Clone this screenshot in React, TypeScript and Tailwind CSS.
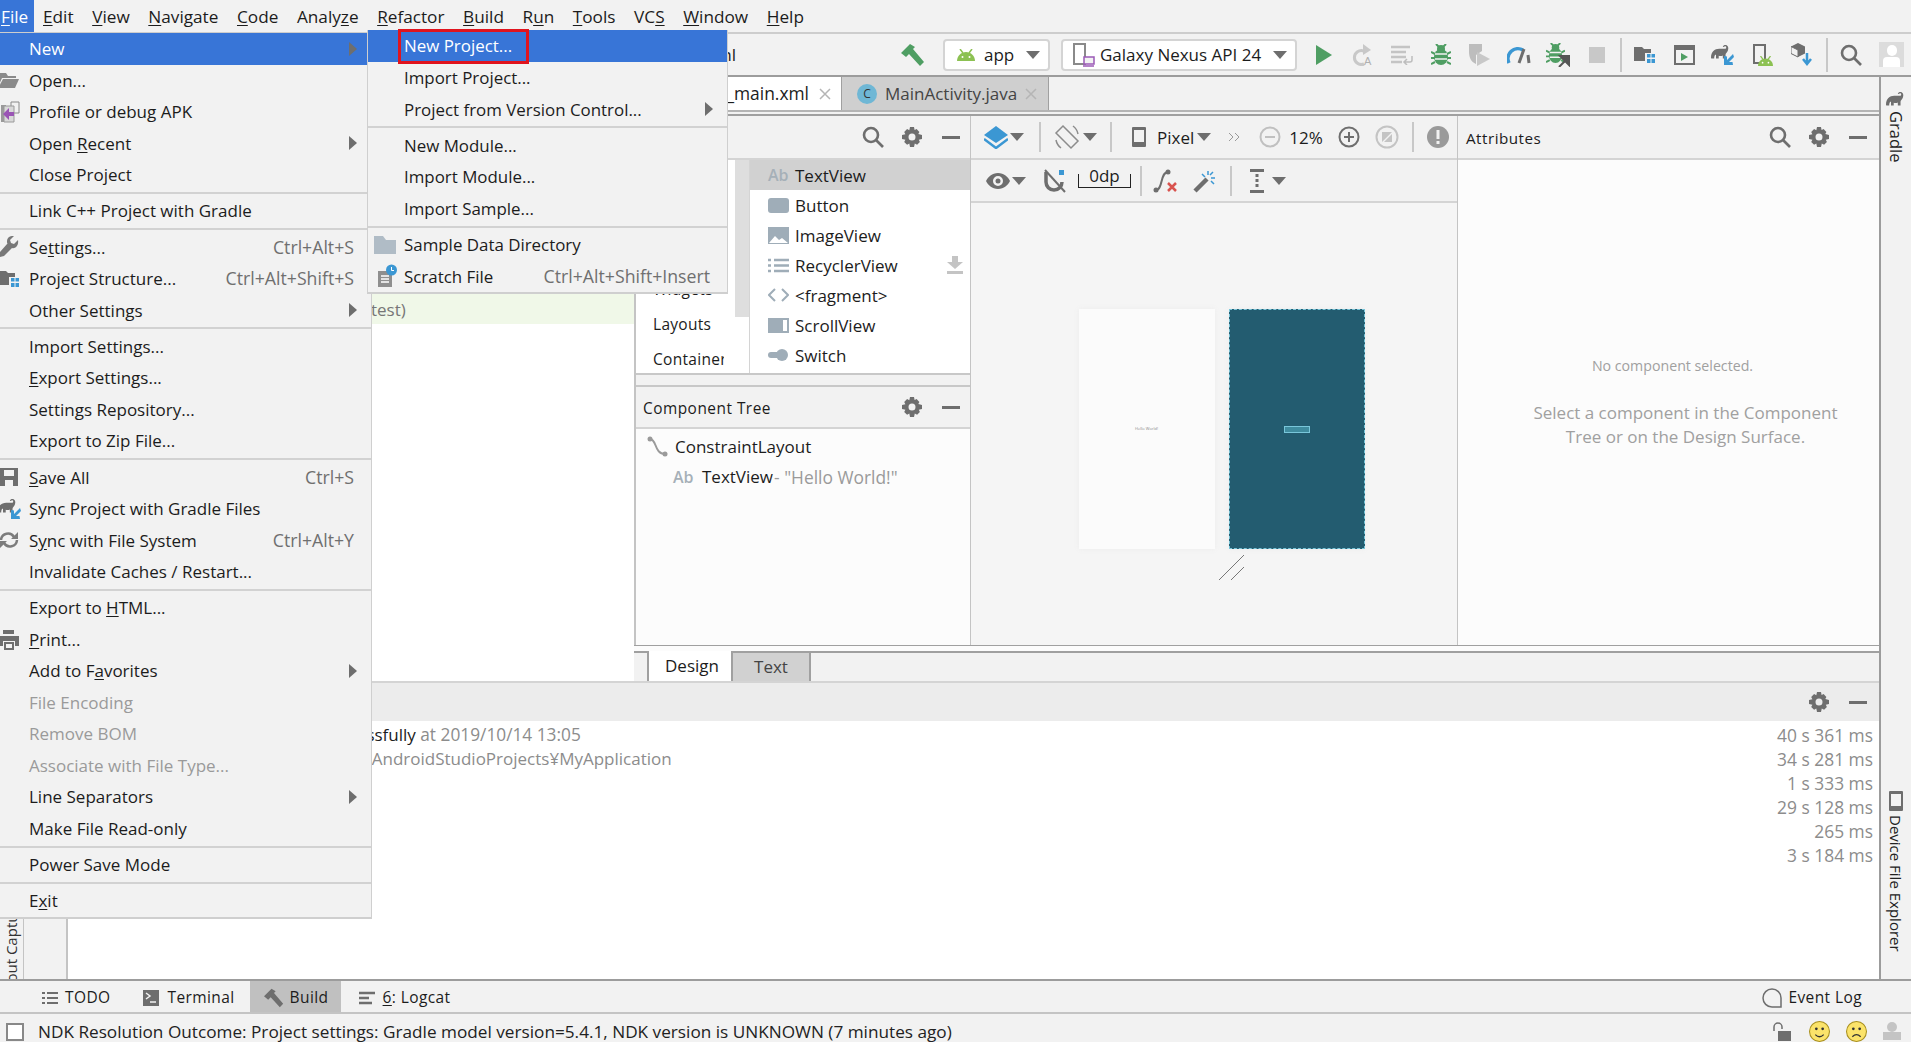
import type { ReactNode } from "react";

const FONT = "font-['Open_Sans','Noto_Sans',sans-serif]";

function U({ children }: { children: ReactNode }) {
  return <span className="underline underline-offset-2">{children}</span>;
}

function Arrow() {
  return (
    <svg width="8" height="14" viewBox="0 0 8 14" className="shrink-0">
      <path d="M0 0l8 7-8 7z" fill="#6e6e6e" />
    </svg>
  );
}

function Caret({ className = "" }: { className?: string }) {
  return (
    <svg width="14" height="8" viewBox="0 0 14 8" className={className}>
      <path d="M0 0h14L7 8z" fill="#6e6e6e" />
    </svg>
  );
}

function Sep() {
  return <div className="h-[4.75px] flex items-center"><div className="h-[2px] w-full bg-[#d2d2d2]" /></div>;
}

interface RowProps {
  children: ReactNode;
  icon?: ReactNode;
  shortcut?: string;
  arrow?: boolean;
  disabled?: boolean;
  active?: boolean;
  inset?: string;
}

function Row({ children, icon, shortcut, arrow, disabled, active, inset = "w-[29px]" }: RowProps) {
  return (
    <div
      className={`h-[31.5px] flex items-center pr-[14px] ${active ? "bg-[#3875d7] text-white" : disabled ? "text-[#9a9a9a]" : "text-[#1c1c1c]"}`}
    >
      <div className={`${inset} shrink-0 flex items-center overflow-hidden`}>{icon}</div>
      <div className="flex-1 whitespace-nowrap">{children}</div>
      {shortcut && <div className="text-[#6f6f6f] text-[17.7px] pr-[3px] whitespace-nowrap">{shortcut}</div>}
      {arrow && <Arrow />}
    </div>
  );
}

const Folder = () => (
  <svg width="22" height="18" viewBox="0 0 22 18" className="-ml-[2px]">
    <path d="M0 2h8l2 3h8v2H4L0 16z" fill="#8a8a8a" />
    <path d="M5 8h16l-4 9H0z" fill="#8a8a8a" />
  </svg>
);
const ProfileApk = () => (
  <svg width="20" height="22" viewBox="0 0 20 22">
    <path d="M1 4h5v17H1z" fill="#9a9a9a" />
    <path d="M11 1h8v11h-8z" fill="#f2f2f2" stroke="#8a8a8a" />
    <path d="M4 5h10v16H4z" fill="#d9d9d9" stroke="#9a9a9a" />
    <path d="M3 13l6-6v4h5v4H9v4z" fill="#9a55b5" />
  </svg>
);
const Wrench = () => (
  <svg width="20" height="22" viewBox="0 0 20 22" className="-ml-[1px]">
    <path d="M19 4l-4 4-3-1-1-3 4-4c-3-.5-7 1-7 5 0 1 0 2 .5 2.5L0 17l1 4 4-1 8-8c3 1 7-2 6-8z" fill="#787878" />
  </svg>
);
const StructureIcon = () => (
  <svg width="22" height="20" viewBox="0 0 22 20" className="-ml-[2px]">
    <path d="M0 2h8l2 2h7v4h-6v8H0z" fill="#6e6e6e" />
    <path d="M13 9h3.5v3.5H13zM17.5 9H21v3.5h-3.5zM13 14h3.5v4H13zM17.5 14H21v4h-3.5z" fill="#3b97d3" />
  </svg>
);
const Save = () => (
  <svg width="19" height="18" viewBox="0 0 19 18">
    <path fillRule="evenodd" d="M0 0h18v18H0zM4 2v6h10V2zM5 12v6h8v-6z" fill="#6e6e6e" />
  </svg>
);
const Elephant = ({ className = "", fill = "#6e6e6e", w = 20 }: { className?: string; fill?: string; w?: number }) => (
  <svg width={w} height={(w * 16) / 22} viewBox="0 0 22 16" className={`shrink-0 ${className}`}>
    <path
      d="M0 14C0 7 4 4 9 4c3 0 5 .5 7 0 1-.5 1-2 0-2.5-.8-.3-1.500.2-1.700.8L13 2c.5-2 3-2.500 4.500-1.500 2.500 1.500 1.500 5.500 0 7.500-.8 1-1.500 2-1.500 3v4h-3v-3.500c-1.500.7-3 .7-4.500.2V15H5.500v-4.500C4 11 3.500 12.500 3.500 15H.3z"
      fill={fill}
    />
  </svg>
);
const GradleSync = () => (
  <div className="relative w-[23px] h-[20px] -ml-[2px]">
    <Elephant className="absolute left-0 top-0" />
    <svg width="11" height="11" viewBox="0 0 11 11" className="absolute right-0 bottom-0">
      <path d="M10 0L4 6V2.500L1 2v9h9l-.5-3H6l5-5z" fill="#3b97d3" />
    </svg>
  </div>
);
const SyncIcon = () => (
  <svg width="20" height="18" viewBox="0 0 20 18" className="-ml-[1px]" fill="none" stroke="#7c7c7c" strokeWidth="2.500">
    <path d="M2 9a7 7 0 0 1 13-3M18 9a7 7 0 0 1-13 3" />
    <path d="M19 1v7h-7zM1 17v-7h7z" fill="#7c7c7c" stroke="none" />
  </svg>
);
const Printer = () => (
  <svg width="20" height="20" viewBox="0 0 20 20" className="-ml-[1px]">
    <path fillRule="evenodd" d="M4 0h11v4H4zM0 6h20v10h-4v-5H4v5H0zM5 12h10v8H5zM7 14v4h6v-4z" fill="#6e6e6e" />
  </svg>
);

function FileMenu() {
  return (
    <div className="absolute left-0 top-[33px] w-[372px] bg-[#f2f2f2] border-r border-b-2 border-[#cfcfcf] text-[17px]">
      <Row active arrow><span>New</span></Row>
      <Row icon={<Folder />}>Open...</Row>
      <Row icon={<ProfileApk />}>Profile or debug APK</Row>
      <Row arrow>Open <U>R</U>ecent</Row>
      <Row>Close Pro<U>j</U>ect</Row>
      <Sep />
      <Row>Link C++ Project with Gradle</Row>
      <Sep />
      <Row icon={<Wrench />} shortcut="Ctrl+Alt+S">Se<U>t</U>tings...</Row>
      <Row icon={<StructureIcon />} shortcut="Ctrl+Alt+Shift+S">Project Structure...</Row>
      <Row arrow>Other Settings</Row>
      <Sep />
      <Row>Import Settings...</Row>
      <Row><U>E</U>xport Settings...</Row>
      <Row>Settings Repository...</Row>
      <Row>Export to Zip File...</Row>
      <Sep />
      <Row icon={<Save />} shortcut="Ctrl+S"><U>S</U>ave All</Row>
      <Row icon={<GradleSync />}>Sync Project with Gradle Files</Row>
      <Row icon={<SyncIcon />} shortcut="Ctrl+Alt+Y">S<U>y</U>nc with File System</Row>
      <Row>Invalidate Caches / Restart...</Row>
      <Sep />
      <Row>Export to <U>H</U>TML...</Row>
      <Row icon={<Printer />}><U>P</U>rint...</Row>
      <Row arrow>Add to F<U>a</U>vorites</Row>
      <Row disabled>File Encoding</Row>
      <Row disabled>Remove BOM</Row>
      <Row disabled>Associate with File Type...</Row>
      <Row arrow>Line Separators</Row>
      <Row>Make File Read-only</Row>
      <Sep />
      <Row>Power Save Mode</Row>
      <Sep />
      <Row>E<U>x</U>it</Row>
    </div>
  );
}

const GrayFolder = () => (
  <svg width="22" height="18" viewBox="0 0 22 18" className="ml-[6px]">
    <path d="M0 0h9l3 4h10v14H0z" fill="#b0bcc6" />
  </svg>
);
const Scratch = () => (
  <svg width="20" height="24" viewBox="0 0 20 24" className="ml-[9px]">
    <path d="M1 7h11l3 3v13H1z" fill="#8f8f8f" />
    <path d="M4 12h8M4 15h8M4 18h8" stroke="#fff" strokeWidth="1.500" />
    <circle cx="14.500" cy="6" r="5.500" fill="#3b97d3" />
    <path d="M14.500 3v3.500h2.500" stroke="#fff" strokeWidth="1" fill="none" />
  </svg>
);

function NewSubmenu() {
  return (
    <div className="absolute left-[367px] top-[30px] w-[361px] bg-[#f2f2f2] border-l border-r border-b-2 border-[#cfcfcf] text-[16.9px]">
      <div className="h-[32px] flex items-center bg-[#3875d7] text-white pl-[36px]">New Project...</div>
      <Row inset="w-[36px]">Import Project...</Row>
      <Row inset="w-[36px]" arrow>Project from Version Control...</Row>
      <Sep />
      <Row inset="w-[36px]">New Module...</Row>
      <Row inset="w-[36px]">Import Module...</Row>
      <Row inset="w-[36px]">Import Sample...</Row>
      <Sep />
      <Row inset="w-[36px]" icon={<GrayFolder />}>Sample Data Directory</Row>
      <Row inset="w-[36px]" icon={<Scratch />} shortcut="Ctrl+Alt+Shift+Insert">Scratch File</Row>
    </div>
  );
}

const Search = ({ className = "" }: { className?: string }) => (
  <svg width="22" height="22" viewBox="0 0 22 22" fill="none" stroke="#6e6e6e" strokeWidth="2.600" className={`shrink-0 ${className}`}>
    <circle cx="9" cy="9" r="7" />
    <path d="M14 14l7 7" />
  </svg>
);
const Gear = () => (
  <svg width="20" height="20" viewBox="0 0 20 20" className="shrink-0">
    <path
      fillRule="evenodd"
      d="M8 0h4l.6 3 2-.9 2.800 2.800-1.100 2.200 3.700.9v4l-3.200.7 1.100 2.300-2.800 2.800-2.300-1.200L12 20H8l-.7-3.400-2.200 1.200-2.900-2.800 1.200-2.300L0 12V8l3.400-.7-1.200-2.400 2.900-2.800 2.200 1.100zM10 6.500a3.500 3.500 0 1 0 0 7 3.500 3.500 0 0 0 0-7z"
      fill="#6e6e6e"
    />
  </svg>
);
const Minus = () => <div className="w-[18px] h-[3px] bg-[#6e6e6e] ml-[2px]" />;
const VSep = ({ className = "h-[30px]" }: { className?: string }) => <div className={`w-[2px] shrink-0 bg-[#c8c8c8] ${className}`} />;

function HeaderTools({ withSearch = true }: { withSearch?: boolean }) {
  return (
    <div className="flex items-center gap-[18px] pr-[10px]">
      {withSearch && <Search />}
      <Gear />
      <Minus />
    </div>
  );
}

function ToolIcon({ children }: { children: ReactNode }) {
  return <div className="w-[39px] flex justify-center items-center shrink-0">{children}</div>;
}

const Hammer = () => (
  <svg width="24" height="24" viewBox="0 0 24 24" className="shrink-0">
    <path d="M0 10L9 1l5 3-2 2 11 13-4 4L8 11l-3 3z" fill="#4f9e63" />
  </svg>
);
const Android = ({ w = 18, fill = "#8cc152" }: { w?: number; fill?: string }) => (
  <svg width={w} height={(w * 12) / 18} viewBox="0 0 18 12" className="shrink-0">
    <path d="M0 12C0 7 4 3 9 3s9 4 9 9z" fill={fill} />
    <path d="M3 0l3 4M15 0l-3 4" stroke={fill} strokeWidth="1.500" />
    <circle cx="5.500" cy="8" r="1" fill="#fff" />
    <circle cx="12.500" cy="8" r="1" fill="#fff" />
  </svg>
);
const DeviceIcon = () => (
  <svg width="22" height="24" viewBox="0 0 22 24" className="shrink-0">
    <path d="M1 1h11v20H1z" fill="none" stroke="#8a8a8a" strokeWidth="2" />
    <path d="M11 14h10v7H11z" fill="#f2f2f2" stroke="#9b59b6" strokeWidth="1.500" />
    <path d="M10 23h11" stroke="#9b59b6" strokeWidth="1.500" />
  </svg>
);
const Play = () => (
  <svg width="16" height="20" viewBox="0 0 16 20"><path d="M0 0l16 10L0 20z" fill="#4f9e63" /></svg>
);
const RerunA = () => (
  <svg width="22" height="22" viewBox="0 0 22 22">
    <path d="M12 7a7 7 0 1 0 0 13" fill="none" stroke="#c8c8c8" strokeWidth="3" />
    <path d="M11 0l8 6-8 5z" fill="#c8c8c8" />
    <text x="12" y="21" fontSize="11" fill="#b0b0b0" fontFamily="Liberation Sans">A</text>
  </svg>
);
const Lines = () => (
  <svg width="22" height="20" viewBox="0 0 22 20">
    <path d="M0 2h19M0 7h15M0 12h15M0 17h11" stroke="#c4c4c4" strokeWidth="2.600" />
    <path d="M21 11v4a2 2 0 0 1-2 2h-5M16 14l-3 3 3 3" fill="none" stroke="#bdbdbd" strokeWidth="1.500" />
  </svg>
);
const Bug = ({ w = 20 }: { w?: number }) => (
  <svg width={w} height={w + 2} viewBox="0 0 20 22">
    <ellipse cx="10" cy="13" rx="7" ry="8" fill="#4f9e63" />
    <circle cx="10" cy="5" r="4" fill="#4f9e63" />
    <path d="M5 0l3 3M15 0l-3 3M0 8l4 2M20 8l-4 2M0 14h4M20 14h-4M0 20l4-2M20 20l-4-2" stroke="#4f9e63" strokeWidth="2" />
    <path d="M4 10h12M4 15h12" stroke="#f2f2f2" strokeWidth="1.500" />
  </svg>
);
const Coverage = () => (
  <svg width="24" height="24" viewBox="0 0 24 24">
    <path d="M1 1h13v7L8 12v9C3 19 1 14 1 9z" fill="#bdbdbd" />
    <path d="M9 9l13 7-13 7z" fill="#c8c8c8" />
  </svg>
);
const Profiler = () => (
  <svg width="24" height="18" viewBox="0 0 24 18" fill="none">
    <path d="M2 17a10 10 0 0 1 14-13" stroke="#3b97d3" strokeWidth="3.500" />
    <path d="M17 3l-5 14M21 9l1 8" stroke="#6e6e6e" strokeWidth="3" />
  </svg>
);
const AttachBug = () => (
  <div className="relative w-[24px] h-[24px]">
    <Bug w={19} />
    <svg width="13" height="13" viewBox="0 0 13 13" className="absolute right-0 bottom-0">
      <path d="M2 13l7-7M3 2h9v9z" stroke="#555" strokeWidth="2" fill="#555" />
    </svg>
  </div>
);
const Stop = () => <div className="w-[16px] h-[16px] bg-[#c8c8c8]" />;
const RunWindow = () => (
  <svg width="21" height="20" viewBox="0 0 21 20">
    <path d="M1 1h19v18H1z" fill="none" stroke="#6e6e6e" strokeWidth="2" />
    <path d="M1 1h19v4H1z" fill="#6e6e6e" />
    <path d="M7 8l7 4-7 4z" fill="#4f9e63" />
  </svg>
);
const Avd = () => (
  <div className="relative w-[20px] h-[22px]">
    <svg width="14" height="20" viewBox="0 0 14 20" className="absolute left-0 top-0">
      <path d="M1 1h11v18H1z" fill="none" stroke="#6e6e6e" strokeWidth="2" />
    </svg>
    <div className="absolute right-0 bottom-0"><Android w={15} /></div>
  </div>
);
const Sdk = () => (
  <svg width="22" height="24" viewBox="0 0 22 24">
    <path d="M7 0l7 3.500v7L7 14l-7-3.500v-7z" fill="#6e6e6e" />
    <path d="M7 7v7L0 10.500v-7z" fill="#f2f2f2" stroke="#6e6e6e" />
    <path d="M16 10v9M12 16l4 5 4-5" stroke="#3b97d3" strokeWidth="2.500" fill="none" />
  </svg>
);
const Avatar = () => (
  <div className="w-[25px] h-[25px] ml-[17px] bg-[#dcdcdc] flex flex-col items-center justify-end overflow-hidden shrink-0">
    <div className="w-[10px] h-[11px] rounded-full bg-white" />
    <div className="w-[17px] h-[10px] bg-white rounded-t mt-[1px]" />
  </div>
);

function Toolbar() {
  return (
    <div className="h-[43px] flex items-center border-b-2 border-[#9c9c9c] bg-[#f2f2f2]">
      <div className="w-[736px] text-right whitespace-nowrap shrink-0">activity_main.xml</div>
      <div className="ml-[165px]"><Hammer /></div>
      <div className="ml-[18px] w-[107px] h-[32px] bg-white border-2 border-[#d4d4d4] rounded-[4px] flex items-center pl-[12px] pr-[8px] shrink-0">
        <Android />
        <span className="ml-[9px] flex-1 pt-[1px]">app</span>
        <Caret />
      </div>
      <div className="ml-[11px] w-[236px] h-[32px] bg-white border-2 border-[#d4d4d4] rounded-[4px] flex items-center pl-[10px] pr-[8px] shrink-0">
        <DeviceIcon />
        <span className="ml-[5px] flex-1 whitespace-nowrap pt-[1px]">Galaxy Nexus API 24</span>
        <Caret />
      </div>
      <div className="ml-[7px] flex items-center">
        <ToolIcon><Play /></ToolIcon>
        <ToolIcon><RerunA /></ToolIcon>
        <ToolIcon><Lines /></ToolIcon>
        <ToolIcon><Bug /></ToolIcon>
        <ToolIcon><Coverage /></ToolIcon>
        <ToolIcon><Profiler /></ToolIcon>
        <ToolIcon><AttachBug /></ToolIcon>
        <ToolIcon><Stop /></ToolIcon>
        <VSep className="h-[34px] mx-[4px]" />
        <ToolIcon><StructureIcon /></ToolIcon>
        <ToolIcon><RunWindow /></ToolIcon>
        <ToolIcon><GradleSync /></ToolIcon>
        <ToolIcon><Avd /></ToolIcon>
        <ToolIcon><Sdk /></ToolIcon>
        <VSep className="h-[34px] ml-[5px] mr-[12px]" />
        <Search />
        <Avatar />
      </div>
    </div>
  );
}

function MenuBar() {
  const items: ReactNode[] = [
    <><U>E</U>dit</>, <><U>V</U>iew</>, <><U>N</U>avigate</>, <><U>C</U>ode</>, <>Analy<U>z</U>e</>,
    <><U>R</U>efactor</>, <><U>B</U>uild</>, <>R<U>u</U>n</>, <><U>T</U>ools</>, <>VC<U>S</U></>, <><U>W</U>indow</>, <><U>H</U>elp</>,
  ];
  return (
    <div className="h-[34px] flex items-center border-b-2 border-[#cdcdcd] bg-[#f2f2f2] text-[17.2px]">
      <div className="w-[34px] h-full bg-[#3875d7] text-white flex items-center pl-[1px] pt-[1px]"><U>F</U>ile</div>
      <div className="flex gap-[18.6px] pl-[9px] pt-[1px]">
        {items.map((it, i) => <span key={i}>{it}</span>)}
      </div>
    </div>
  );
}

function Close({ color = "#b5b5b5" }: { color?: string }) {
  return (
    <svg width="12" height="12" viewBox="0 0 12 12" className="shrink-0"><path d="M1 1l10 10M11 1L1 11" stroke={color} strokeWidth="1.500" /></svg>
  );
}

function Tabs() {
  return (
    <div className="h-[39px] flex flex-col border-b-2 border-[#a0a0a0] bg-[#f2f2f2]">
      <div className="h-[35px] flex border-b-2 border-[#b4b4b4]">
        <div className="ml-[536px] w-[282px] bg-white flex items-center justify-end pr-[10px] gap-[10px] border-r border-[#a0a0a0] whitespace-nowrap text-[17.4px]">
          activity_main.xml<Close />
        </div>
        <div className="w-[207px] bg-[#cfcfcf] flex items-center pl-[15px] gap-[8px] text-[#444] border-r border-[#a0a0a0] whitespace-nowrap">
          <div className="w-[20px] h-[20px] rounded-full bg-[#6fb7d5] text-[#333] text-[12px] leading-[20px] text-center">C</div>
          MainActivity.java
          <Close />
        </div>
      </div>
    </div>
  );
}

const AbIcon = () => <span className="text-[#a6b0b8] font-semibold text-[16px] w-[22px]">Ab</span>;

function PaletteRow({ icon, label, selected, extra }: { icon: ReactNode; label: string; selected?: boolean; extra?: ReactNode }) {
  return (
    <div className={`h-[30px] flex items-center pl-[18px] pr-[7px] ${selected ? "bg-[#d1d1d1]" : ""}`}>
      <div className="w-[27px] flex items-center">{icon}</div>
      <span className="flex-1 pt-[2px]">{label}</span>
      {extra}
    </div>
  );
}

const PB = "#9fadb8";
const BtnIcon = () => <div className="w-[21px] h-[15px] rounded-[3px] bg-[#9fadb8]" />;
const ImgIcon = () => (
  <svg width="21" height="17" viewBox="0 0 21 17">
    <path d="M0 0h21v17H0z" fill={PB} />
    <path d="M1 16l6-7 4 4 3-2 6 5z" fill="#fff" />
  </svg>
);
const ListIcon = () => (
  <svg width="21" height="15" viewBox="0 0 21 15"><path d="M0 2h3M6 2h15M0 7.500h3M6 7.500h15M0 13h3M6 13h15" stroke={PB} strokeWidth="2.500" /></svg>
);
const CodeIcon = () => (
  <svg width="21" height="14" viewBox="0 0 21 14" fill="none" stroke={PB} strokeWidth="2"><path d="M7 1L1 7l6 6M14 1l6 6-6 6" /></svg>
);
const ScrollIcon = () => (
  <svg width="21" height="15" viewBox="0 0 21 15"><path fillRule="evenodd" d="M0 0h21v15H0zM15 2v11h4V2z" fill={PB} /></svg>
);
const SwitchIcon = () => (
  <div className="flex items-center w-[21px]"><div className="w-[9px] h-[6px] bg-[#9fadb8] rounded-l-full" /><div className="w-[12px] h-[12px] -ml-[1px] rounded-full bg-[#9fadb8]" /></div>
);
const Download = () => (
  <svg width="16" height="18" viewBox="0 0 16 18"><path d="M5 0h6v6h5l-8 7-8-7h5zM0 15h16v3H0z" fill="#c4c4c4" /></svg>
);

function Palette() {
  return (
    <div className="w-[336px] shrink-0 flex flex-col border-l-2 border-[#c4c4c4] bg-white">
      <div className="h-[44px] flex items-center justify-between bg-[#f2f2f2] border-b-2 border-[#d4d4d4]">
        <span className="pl-[8px] pt-[2px] text-[15px] tracking-[0.5px]">Palette</span>
        <HeaderTools />
      </div>
      <div className="h-[215px] flex border-b-2 border-[#c8c8c8] bg-white">
        <div className="w-[114px] relative border-r border-[#d4d4d4] text-[15.5px] tracking-[0.3px] pt-[7px]">
          {["Common", "Text", "Buttons", "Widgets", "Layouts", "Containers"].map((c) => (
            <div key={c} className="h-[35px] leading-[35px] pl-[17px] w-[88px] overflow-hidden whitespace-nowrap">{c}</div>
          ))}
          <div className="absolute top-0 right-0 w-[14px] h-[157px] bg-[#dedede]" />
        </div>
        <div className="flex-1 overflow-hidden">
          <PaletteRow selected icon={<AbIcon />} label="TextView" />
          <PaletteRow icon={<BtnIcon />} label="Button" />
          <PaletteRow icon={<ImgIcon />} label="ImageView" />
          <PaletteRow icon={<ListIcon />} label="RecyclerView" extra={<Download />} />
          <PaletteRow icon={<CodeIcon />} label="<fragment>" />
          <PaletteRow icon={<ScrollIcon />} label="ScrollView" />
          <PaletteRow icon={<SwitchIcon />} label="Switch" />
        </div>
      </div>
      <div className="h-[12px] bg-[#f2f2f2] border-b-2 border-[#c8c8c8]" />
      <div className="h-[42px] flex items-center justify-between bg-[#f2f2f2] border-b-2 border-[#d4d4d4]">
        <span className="pl-[7px] pt-[3px] text-[15.4px] tracking-[0.5px]">Component Tree</span>
        <HeaderTools withSearch={false} />
      </div>
      <div className="flex-1 bg-[#fcfcfc] pt-[3px]">
        <div className="h-[30px] flex items-center pl-[11px]">
          <svg width="22" height="22" viewBox="0 0 22 22" fill="none" className="mr-[6px]">
            <path d="M3 3c7 0 4 15 15 15" stroke="#9a9a9a" strokeWidth="2" />
            <circle cx="3" cy="3" r="2.500" fill="#9a9a9a" />
            <circle cx="18" cy="18" r="2.500" fill="#9a9a9a" />
          </svg>
          ConstraintLayout
        </div>
        <div className="h-[30px] flex items-center pl-[37px] whitespace-nowrap">
          <span className="text-[#a6b0b8] font-semibold text-[16px] w-[29px]">Ab</span>
          TextView<span className="text-[#9a9a9a] ml-[1px] text-[17.4px]">- "Hello World!"</span>
        </div>
      </div>
    </div>
  );
}

function DesignToolbar() {
  return (
    <div className="flex flex-col">
      <div className="h-[44px] flex items-center bg-[#f2f2f2] border-b-2 border-[#d4d4d4] pl-[13px]">
        <svg width="24" height="24" viewBox="0 0 24 24" className="shrink-0">
          <path d="M12 1l12 9-12 8L0 10z" fill="#3b97d3" />
          <path d="M0 14l12 9 12-9" fill="none" stroke="#3b97d3" strokeWidth="2.500" />
        </svg>
        <Caret className="ml-[2px]" />
        <VSep className="h-[30px] ml-[15px]" />
        <svg width="28" height="28" viewBox="0 0 28 28" fill="none" stroke="#8c8c8c" strokeWidth="1.500" className="ml-[12px] shrink-0">
          <path d="M10 3l15 15-7 7L3 10z" />
          <path d="M20 3a13 13 0 0 1 5 8M8 25a13 13 0 0 1-5-8" />
        </svg>
        <Caret className="ml-[2px]" />
        <VSep className="h-[30px] ml-[13px]" />
        <svg width="14" height="20" viewBox="0 0 14 20" className="ml-[20px] shrink-0">
          <path fillRule="evenodd" d="M1 0h12a1 1 0 0 1 1 1v18a1 1 0 0 1-1 1H1a1 1 0 0 1-1-1V1a1 1 0 0 1 1-1zM2 3v12h10V3z" fill="#6e6e6e" />
        </svg>
        <span className="ml-[11px] pt-[2px]">Pixel</span>
        <Caret className="ml-[3px]" />
        <svg width="13" height="10" viewBox="0 0 13 10" fill="none" stroke="#9a9a9a" className="ml-[17px] shrink-0">
          <path d="M1 1l4 4-4 4M7 1l4 4-4 4" />
        </svg>
        <svg width="22" height="22" viewBox="0 0 22 22" fill="none" stroke="#c0c0c0" strokeWidth="2" className="ml-[18px] shrink-0">
          <circle cx="11" cy="11" r="9.500" /><path d="M6 11h10" />
        </svg>
        <span className="ml-[8px] pt-[2px]">12%</span>
        <svg width="22" height="22" viewBox="0 0 22 22" fill="none" stroke="#6e6e6e" strokeWidth="2" className="ml-[15px] shrink-0">
          <circle cx="11" cy="11" r="9.500" /><path d="M6 11h10M11 6v10" />
        </svg>
        <svg width="24" height="24" viewBox="0 0 24 24" fill="none" stroke="#c4c4c4" strokeWidth="2" className="ml-[15px] shrink-0">
          <circle cx="12" cy="12" r="10.500" /><path d="M7 7h10L7 17zM17 9v8H9z" fill="#c4c4c4" stroke="none" />
        </svg>
        <VSep className="h-[30px] ml-[13px]" />
        <svg width="22" height="22" viewBox="0 0 22 22" className="ml-[13px] shrink-0">
          <circle cx="11" cy="11" r="11" fill="#9a9a9a" /><path d="M9.500 4h3v9h-3zM9.500 15h3v3h-3z" fill="#f2f2f2" />
        </svg>
      </div>
      <div className="h-[43px] flex items-center bg-[#f2f2f2] border-b-2 border-[#d4d4d4] pl-[15px]">
        <svg width="24" height="16" viewBox="0 0 24 16" className="shrink-0">
          <path fillRule="evenodd" d="M12 0c6 0 10 4 12 8-2 4-6 8-12 8S2 12 0 8c2-4 6-8 12-8zm0 3a5 5 0 1 0 0 10 5 5 0 0 0 0-10z" fill="#6e6e6e" />
          <circle cx="12" cy="8" r="2.500" fill="#6e6e6e" />
        </svg>
        <Caret className="ml-[2px]" />
        <svg width="22" height="24" viewBox="0 0 22 24" fill="none" className="ml-[18px] shrink-0">
          <path d="M2 3v10a8 8 0 0 0 16 0" stroke="#6e6e6e" strokeWidth="3.500" />
          <path d="M1 1l20 22" stroke="#6e6e6e" strokeWidth="2" />
          <path d="M15 1h5v5h-5z" fill="#3b97d3" />
        </svg>
        <div className="ml-[12px] w-[53px] h-[14px] border-b border-l border-r border-[#222] flex items-end justify-center shrink-0">
          <span className="leading-[22px]">0dp</span>
        </div>
        <VSep className="h-[30px] ml-[9px]" />
        <svg width="26" height="24" viewBox="0 0 26 24" fill="none" className="ml-[11px] shrink-0">
          <path d="M3 21C10 21 7 3 15 3" stroke="#6e6e6e" strokeWidth="2" />
          <circle cx="3" cy="21" r="2.500" fill="#6e6e6e" /><circle cx="15" cy="3" r="2.500" fill="#6e6e6e" />
          <path d="M15 14l8 8M23 14l-8 8" stroke="#d9534f" strokeWidth="2.500" />
        </svg>
        <svg width="24" height="24" viewBox="0 0 24 24" fill="none" className="ml-[14px] shrink-0">
          <path d="M2 22L14 10" stroke="#6e6e6e" strokeWidth="4.500" />
          <path d="M15 2v4M22 9h-4M9 5l3 3M21 15l-3-3M20 3l-3 3" stroke="#3b97d3" strokeWidth="1.500" />
        </svg>
        <VSep className="h-[30px] ml-[13px]" />
        <svg width="14" height="24" viewBox="0 0 14 24" className="ml-[18px] shrink-0">
          <path d="M0 0h14v3H0zM0 21h14v3H0zM5.500 5h3v3h-3zM5.500 10h3v3h-3zM5.500 15h3v3h-3z" fill="#6e6e6e" />
        </svg>
        <Caret className="ml-[8px]" />
      </div>
    </div>
  );
}

function DesignSurface() {
  return (
    <div className="flex-1 bg-[#f5f5f5] relative">
      <div className="flex justify-center gap-[14px] pt-[106px] pl-[15px]">
        <div className="w-[136px] h-[240px] bg-[#fbfbfb] shadow-[0_0_6px_#ececec] flex items-center justify-center">
          <span className="text-[4px] text-[#888]">Hello World!</span>
        </div>
        <div className="w-[136px] h-[240px] bg-[#235c70] border border-dashed border-[#79c6da] shadow-[0_0_6px_#ececec] flex items-center justify-center">
          <div className="w-[26px] h-[7px] border border-[#79c6da] bg-[#3f8c9f]" />
        </div>
      </div>
      <svg width="28" height="28" viewBox="0 0 28 28" className="ml-[247px] mt-[5px]" fill="none" stroke="#777">
        <path d="M1 26L26 1M13 26L26 13" />
      </svg>
    </div>
  );
}

function Attributes() {
  return (
    <div className="flex-1 flex flex-col border-l border-[#c4c4c4]">
      <div className="h-[44px] flex items-center justify-between bg-[#f2f2f2] border-b-2 border-[#d4d4d4]">
        <span className="pl-[8px] pt-[2px] text-[15.2px] tracking-[0.5px]">Attributes</span>
        <div className="pr-[2px]"><HeaderTools /></div>
      </div>
      <div className="flex-1 bg-[#fcfcfc] text-[#a0a0a0] text-center pt-[194px]">
        <div className="h-[24px] leading-[24px] text-[14.2px] pl-[8px]">No component selected.</div>
        <div className="mt-[23px] h-[24px] leading-[24px] pl-[34px]">Select a component in the Component</div>
        <div className="h-[24px] leading-[24px] pl-[34px]">Tree or on the Design Surface.</div>
      </div>
    </div>
  );
}

function TimeList() {
  const times = ["40 s 361 ms", "34 s 281 ms", "1 s 333 ms", "29 s 128 ms", "265 ms", "3 s 184 ms"];
  return (
    <div className="text-right text-[#8c8c8c] text-[17.4px] pr-[6px] pt-[2px]">
      {times.map((t) => <div key={t} className="h-[24px] leading-[24px] whitespace-nowrap">{t}</div>)}
    </div>
  );
}

function BuildPanel() {
  return (
    <div className="h-[296px] flex flex-col">
      <div className="h-[38px] flex items-center justify-end bg-[#ececec] pr-[12px] gap-[18px] shrink-0">
        <Gear /><Minus />
      </div>
      <div className="flex-1 flex min-h-0">
        <div className="w-[44px] bg-[#f2f2f2] border-r-2 border-[#c4c4c4]" />
        <div className="flex-1 bg-white pt-[2px] whitespace-nowrap">
          <div className="h-[24px] leading-[24px] pl-[116px]">Build: completed successfully <span className="text-[#8c8c8c] text-[17.3px]">at 2019/10/14 13:05</span></div>
          <div className="h-[24px] leading-[24px] text-[#8c8c8c] pl-[224px]">C:¥Users¥AndroidStudioProjects¥MyApplication</div>
        </div>
        <div className="bg-white"><TimeList /></div>
      </div>
    </div>
  );
}

function DesignTabs() {
  return (
    <div className="h-[32px] flex items-stretch bg-[#f2f2f2] border-b-2 border-[#d4d4d4]">
      <div className="w-[15px] border-t-2 border-r-2 border-[#a0a0a0]" />
      <div className="w-[82px] bg-white flex items-center justify-center pl-[4px]">Design</div>
      <div className="w-[80px] bg-[#d1d1d1] border-2 border-b-0 border-[#a0a0a0] flex items-center justify-center text-[#444]">Text</div>
      <div className="flex-1 border-t-2 border-[#a0a0a0]" />
    </div>
  );
}

function BottomBar() {
  return (
    <div className="h-[35px] shrink-0 flex items-center bg-[#f2f2f2] border-t-2 border-b-2 border-t-[#9c9c9c] border-b-[#c4c4c4] text-[15.5px] tracking-[0.4px]">
      <div className="ml-[42px] flex items-center gap-[7px] pt-[3px]">
        <svg width="16" height="14" viewBox="0 0 16 14"><path d="M0 2h3M5 2h11M0 7h3M5 7h11M0 12h3M5 12h11" stroke="#6e6e6e" strokeWidth="2" /></svg>
        TODO
      </div>
      <div className="ml-[32px] flex items-center gap-[9px] pt-[3px]">
        <svg width="16" height="16" viewBox="0 0 16 16"><path d="M0 0h16v16H0z" fill="#6e6e6e" /><path d="M3 3l4 3-4 3M7 12h6" stroke="#f2f2f2" strokeWidth="1.500" fill="none" /></svg>
        Terminal
      </div>
      <div className="ml-[15px] w-[91px] h-full bg-[#c0c0c0] flex items-center pl-[14px] gap-[6px] pt-[3px]">
        <svg width="20" height="20" viewBox="0 0 24 24"><path d="M0 10L9 1l5 3-2 2 11 13-4 4L8 11l-3 3z" fill="#6e6e6e" /></svg>
        Build
      </div>
      <div className="ml-[18px] flex items-center gap-[8px] pt-[3px]">
        <svg width="16" height="14" viewBox="0 0 16 14"><path d="M0 2h16M0 7h10M0 12h13" stroke="#6e6e6e" strokeWidth="2.500" /></svg>
        <span><U>6</U>: Logcat</span>
      </div>
      <div className="ml-auto mr-[49px] flex items-center gap-[6px] pt-[3px]">
        <svg width="20" height="20" viewBox="0 0 20 20" fill="none" stroke="#6e6e6e" strokeWidth="1.500"><path d="M10 1a9 9 0 0 0 0 18h9v-9a9 9 0 0 0-9-9z" /></svg>
        Event Log
      </div>
    </div>
  );
}

function Smiley({ mouth }: { mouth: string }) {
  return (
    <svg width="21" height="21" viewBox="0 0 20 20" className="shrink-0">
      <circle cx="10" cy="10" r="9.500" fill="#fbe36a" stroke="#a88f1e" />
      <circle cx="7" cy="7.500" r="1.300" fill="#333" />
      <circle cx="13" cy="7.500" r="1.300" fill="#333" />
      <path d={mouth} fill="none" stroke="#333" strokeWidth="1.200" />
    </svg>
  );
}

function StatusBar() {
  return (
    <div className="h-[28px] shrink-0 flex items-center bg-[#f2f2f2] text-[17.2px] text-[#222] pt-[7px]">
      <div className="ml-[6px] w-[18px] h-[18px] border-2 border-[#888] bg-white shrink-0" />
      <span className="ml-[14px] whitespace-nowrap">NDK Resolution Outcome: Project settings: Gradle model version=5.4.1, NDK version is UNKNOWN (7 minutes ago)</span>
      <div className="ml-auto flex items-center gap-[16px] pr-[10px]">
        <svg width="18" height="20" viewBox="0 0 18 20" fill="none" className="mr-[2px] shrink-0">
          <path d="M1 9V5a4 4 0 0 1 8 0v2" stroke="#6e6e6e" strokeWidth="1.500" />
          <path d="M5 9h13v10H5z" fill="#6e6e6e" />
        </svg>
        <Smiley mouth="M6 13q4 4 8 0" />
        <Smiley mouth="M6 15q4-4 8 0" />
        <div className="w-[18px] h-[20px] flex flex-col items-center">
          <div className="w-[10px] h-[10px] rounded-full bg-[#c4c4c4]" />
          <div className="w-[18px] h-[8px] bg-[#c4c4c4]" />
        </div>
      </div>
    </div>
  );
}

function SideStrips({ children, side }: { children?: ReactNode; side: "left" | "right" }) {
  return (
    <div className={`relative bg-[#f2f2f2] ${side === "left" ? "w-[24px] border-r border-[#c4c4c4]" : "w-[32px] border-l-2 border-[#9c9c9c]"} shrink-0 overflow-hidden`}>
      {children}
    </div>
  );
}

export default function App() {
  return (
    <div className={`w-[1911px] h-[1042px] relative overflow-hidden flex flex-col bg-[#f2f2f2] text-[#1c1c1c] text-[17px] ${FONT}`}>
      <MenuBar />
      <Toolbar />
      <div className="flex-1 flex min-h-0">
        <SideStrips side="left">
          <div className="absolute bottom-[-27px] left-0 w-[24px] h-[140px] flex items-end justify-start">
            <span className="[writing-mode:vertical-rl] rotate-180 whitespace-nowrap text-[15px] text-[#333]">Layout Capture</span>
          </div>
        </SideStrips>
        <div className="flex-1 flex flex-col min-w-0">
          <Tabs />
          <div className="h-[567px] flex shrink-0">
            <div className="w-[610px] shrink-0 bg-white flex flex-col border-b-2 border-[#d4d4d4]">
              <div className="h-[176px]" />
              <div className="h-[32px] bg-[#f0f8e8] text-[#777] pl-[347px] pt-[2px] leading-[32px] overflow-hidden whitespace-nowrap">test)</div>
            </div>
            <div className="flex-1 flex flex-col min-w-0">
              <div className="h-[529px] flex min-h-0 shrink-0">
                <Palette />
                <div className="w-[487px] shrink-0 flex flex-col border-l border-[#c4c4c4]">
                  <DesignToolbar />
                  <DesignSurface />
                </div>
                <Attributes />
              </div>
              <div className="h-[1px] bg-[#a0a0a0]" />
              <div className="h-[5px] bg-[#fcfcfc]" />
              <DesignTabs />
            </div>
          </div>
          <BuildPanel />
        </div>
        <SideStrips side="right">
          <div className="pt-[15px] flex flex-col items-center h-full">
            <Elephant />
            <span className="[writing-mode:vertical-rl] mt-[4px] text-[16.5px] text-[#222]">Gradle</span>
            <svg width="14" height="20" viewBox="0 0 14 20" className="mt-[629px] shrink-0">
              <path fillRule="evenodd" d="M1 0h12a1 1 0 0 1 1 1v18a1 1 0 0 1-1 1H1a1 1 0 0 1-1-1V1a1 1 0 0 1 1-1zM2 3v12h10V3z" fill="#6e6e6e" />
            </svg>
            <span className="[writing-mode:vertical-rl] mt-[4px] text-[15px] text-[#222] whitespace-nowrap">Device File Explorer</span>
          </div>
        </SideStrips>
      </div>
      <BottomBar />
      <StatusBar />
      <FileMenu />
      <NewSubmenu />
      <div className="absolute left-[398px] top-[29px] w-[131px] h-[35px] border-[3px] border-[#e0141e]" />
    </div>
  );
}
